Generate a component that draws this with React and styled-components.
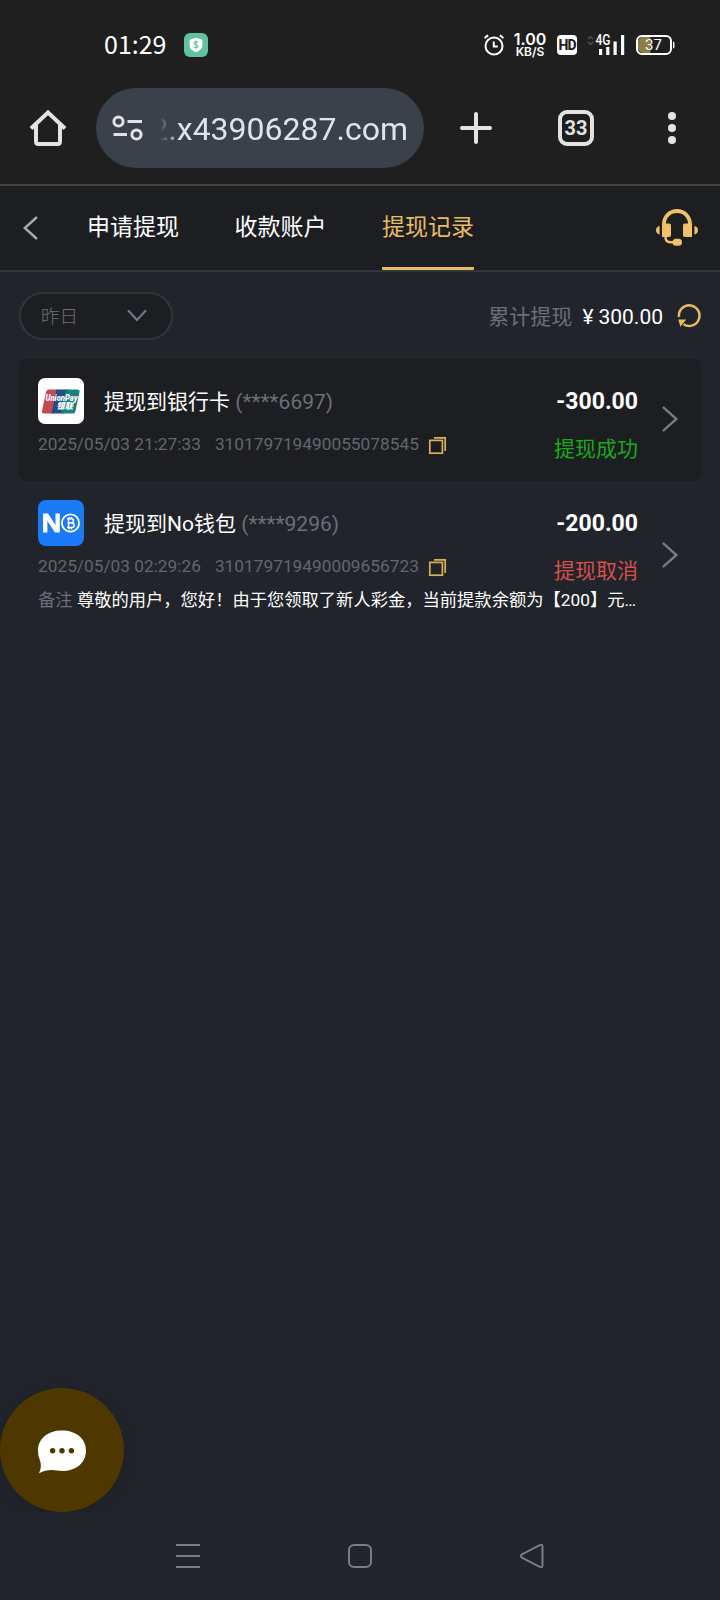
import React from 'react'
import styled, { createGlobalStyle } from 'styled-components'

const records = [
  {
    id: '310179719490055078545',
    logo: 'union',
    title: '提现到银行卡',
    account: '(****6697)',
    time: '2025/05/03 21:27:33',
    amount: '-300.00',
    status: '提现成功',
    ok: true,
  },
  {
    id: '310179719490009656723',
    logo: 'no',
    title: '提现到No钱包',
    account: '(****9296)',
    time: '2025/05/03 02:29:26',
    amount: '-200.00',
    status: '提现取消',
    ok: false,
    note: '尊敬的用户，您好！由于您领取了新人彩金，当前提款余额为【200】元…',
  },
]

function StatusBar() {
  return (
    <Status>
      <Clock>01:29</Clock>
      <Shield width="24" height="24" viewBox="0 0 24 24">
        <rect width="24" height="24" rx="6" fill="#5fc3a1" />
        <path d="M12 4.8l6.4 1.9v5.8c0 3.3-3 5.4-6.4 6.8-3.4-1.4-6.4-3.5-6.4-6.8V6.7z" fill="#fff" />
        <path d="M14 9.6c-.3-.8-1-1.1-2-1.1-1.2 0-2 .5-2 1.4 0 2.2 4.1 1 4.1 3.3 0 1-.9 1.5-2.1 1.5-1.1 0-1.9-.4-2.2-1.3M12 7.4v8.4" fill="none" stroke="#5fc3a1" strokeWidth="1.1" />
      </Shield>
      <Alarm width="20" height="22" viewBox="0 0 20 22" fill="none" stroke="#fff">
        <circle cx="10" cy="12" r="8.5" strokeWidth="2" />
        <path d="M9.8 7.5v5h4" strokeWidth="2" />
        <path d="M.8 4.4C1.5 3 2.7 2 4.2 1.500M15.8 1.5c1.5.5 2.7 1.5 3.4 2.9" strokeWidth="2" />
      </Alarm>
      <Speed>
        <b>1.00</b>
        <small>KB/S</small>
      </Speed>
      <Hd>HD</Hd>
      <Signal width="38" height="22" viewBox="0 0 38 22">
        <path d="M1 5l2.5-2.5L6 5M1 8l2.5 2.5L6 8" fill="none" stroke="#505050" strokeWidth="1.5" />
        <text x="8.5" y="11.4" fontSize="14" fontWeight="500" textLength="15" lengthAdjust="spacingAndGlyphs" fill="#fff">4G</text>
        <path d="M12 15h3.2v6H12zM19.2 13h3.2v8h-3.2zM26.5 7.5h3.2V21h-3.2zM34 1h3.2v20H34z" fill="#fff" />
      </Signal>
      <Battery width="39" height="20" viewBox="0 0 39 20">
        <path d="M14.3 2v16H7a5 5 0 01-5-5V7a5 5 0 015-5z" fill="#8e7d45" />
        <rect x="1" y="1" width="34" height="18" rx="5" fill="none" stroke="#fff" strokeWidth="2" />
        <path d="M37 6.5c1.3 0 1.5.8 1.5 3.5s-.2 3.5-1.5 3.5z" fill="#fff" />
        <text x="17.5" y="15.2" fontSize="15" textAnchor="middle" fill="#fff">37</text>
      </Battery>
    </Status>
  )
}

function BrowserBar() {
  return (
    <Browser>
      <svg width="36" height="36" viewBox="0 0 36 36" fill="none" stroke="#e3e3e3" strokeWidth="4" strokeLinejoin="round">
        <path d="M1 18.500L18 2.500l17 16" strokeLinejoin="miter" />
        <path d="M6 15v16.500Q6 34 8.500 34h19q2.500 0 2.500-2.500V15" />
      </svg>
      <Address>
        <svg width="31" height="26" viewBox="0 0 31 26" fill="none" stroke="#e3e3e3" strokeWidth="3">
          <circle cx="6.5" cy="6.5" r="4.600" />
          <circle cx="24.5" cy="19.5" r="4.600" />
          <path d="M15.5 6.500H30M1.5 19.500H15" />
        </svg>
        <Url>2.x43906287.com</Url>
      </Address>
      <Plus width="32" height="32" viewBox="0 0 32 32" stroke="#e3e3e3" strokeWidth="4" strokeLinecap="round">
        <path d="M2 16h28M16 2v28" />
      </Plus>
      <TabCount>33</TabCount>
      <svg width="8" height="32" viewBox="0 0 8 32" fill="#e3e3e3">
        <circle cx="4" cy="4" r="4" />
        <circle cx="4" cy="16" r="4" />
        <circle cx="4" cy="28" r="4" />
      </svg>
    </Browser>
  )
}

function Headset() {
  return (
    <svg width="42" height="38" viewBox="0 0 42 38" fill="#f0c265">
      <path d="M6 15.5C6 6.500 12.500 0 21 0s15 6.500 15 15.500h-3.800C32 8.500 27.500 4 21 4S10 8.500 9.800 15.500z" />
      <path d="M7.500 14.500h5.500c1.300 0 2 .7 2 2v9.500c0 1.300-.7 2-2 2H6V15z" />
      <path d="M34.500 14.500H29c-1.300 0-2 .7-2 2v9.500c0 1.300.7 2 2 2h7V15z" />
      <path d="M3.600 17v8.500C1.300 25 0 23.500 0 21.200S1.300 17.500 3.600 17zM38.400 17v8.500c2.300-.5 3.600-2 3.600-4.300s-1.300-3.700-3.600-4.200z" />
      <path d="M9.500 26v2c0 3.800 2 5.300 5 5.300h5" fill="none" stroke="#f0c265" strokeWidth="2.400" />
      <rect x="16.500" y="29.800" width="9.500" height="7" rx="3.500" />
    </svg>
  )
}

function UnionPay() {
  return (
    <svg width="46" height="46" viewBox="0 0 46 46">
      <rect width="46" height="46" rx="7" fill="#fff" />
      <path d="M10.500 11.500H20l-5 24H6q-2.500 0-2-2.500l4-19q.5-2.500 2.500-2.500z" fill="#c7494e" />
      <path d="M18.500 11.500H31l-5 24H13.500z" fill="#1d4e87" />
      <path d="M28 11.500h11.500q2.500 0 2 2.500l-4 19q-.5 2.500-2.500 2.500H23z" fill="#1a8181" />
      <text x="7.500" y="23" fontSize="8.500" fontWeight="900" fontStyle="italic" textLength="32" lengthAdjust="spacingAndGlyphs" fill="#fff">UnionPay</text>
      <text x="18.500" y="31" fontSize="8.500" fontWeight="900" fontStyle="italic" textLength="16.500" lengthAdjust="spacingAndGlyphs" fill="#fff">银联</text>
    </svg>
  )
}

function NoWallet() {
  return (
    <svg width="46" height="46" viewBox="0 0 46 46">
      <rect width="46" height="46" rx="8" fill="#1a7af8" />
      <path d="M5 32.500v-19h5l7.500 11.500V13.500h4.300v19H17L9.400 21v11.500z" fill="#fff" />
      <circle cx="32.500" cy="23" r="8.600" fill="none" stroke="#fff" strokeWidth="1.800" />
      <path d="M29 18.800h4.200c3 0 3 4.100 0 4.100h-3.200 3.700c3.300 0 3.300 4.500 0 4.500H29M30.500 18.800v8.600M31.300 17v1.800M33.500 17v1.800M31.300 27.400v1.800M33.500 27.400v1.800" fill="none" stroke="#fff" strokeWidth="1.500" />
    </svg>
  )
}

function Record({ item }) {
  return (
    <Card $dark={item.ok}>
      <Info>
        <Row>
          {item.logo === 'union' ? <UnionPay /> : <NoWallet />}
          <Title>
            {item.title} <span>{item.account}</span>
          </Title>
        </Row>
        <Meta>
          <span>{item.time}</span>
          <span>{item.id}</span>
          <svg width="17" height="17" viewBox="0 0 17 17" fill="none" stroke="#d9b056" strokeWidth="1.700">
            <rect x=".8" y="3.400" width="12.600" height="12.800" />
            <path d="M5 .8h11.200V14" />
          </svg>
        </Meta>
      </Info>
      <Result>
        <Amount>{item.amount}</Amount>
        <State $ok={item.ok}>{item.status}</State>
      </Result>
      <Arrow $low={!!item.note} width="16" height="26" viewBox="0 0 16 26" fill="none" stroke="#747a87" strokeWidth="2.400" strokeLinecap="round">
        <path d="M1.600 1.600L14.400 13 1.600 24.400" />
      </Arrow>
      {item.note && (
        <Note>
          <span>备注</span> {item.note}
        </Note>
      )}
    </Card>
  )
}

function App() {
  return (
    <Screen>
      <GlobalStyle />
      <StatusBar />
      <BrowserBar />
      <Header>
        <svg width="15" height="24" viewBox="0 0 15 24" fill="none" stroke="#a5aab8" strokeWidth="2.400">
          <path d="M14 1L1.800 12 14 23" />
        </svg>
        <Tabs>
          <Tab>申请提现</Tab>
          <Tab>收款账户</Tab>
          <Tab $active>提现记录</Tab>
        </Tabs>
        <Headset />
      </Header>
      <Content>
        <Filter>
          <Select>
            昨日
            <svg width="20" height="13" viewBox="0 0 20 13" fill="none" stroke="#747a87" strokeWidth="2">
              <path d="M1 1.200l9 9.800 9-9.800" />
            </svg>
          </Select>
          <Total>
            累计提现 <b>¥</b><strong>300.00</strong>
          </Total>
          <svg width="24" height="24" viewBox="0 0 24 24" fill="none" stroke="#e5ba60" strokeWidth="2.500">
            <path d="M2 13A10.300 10.300 0 116.500 20.200" />
            <path d="M1.200 15.600h8L3.500 22.800z" fill="#e5ba60" stroke="none" />
          </svg>
        </Filter>
        <List>
          {records.map((item) => (
            <Record key={item.id} item={item} />
          ))}
        </List>
        <Chat>
          <svg width="50" height="46" viewBox="0 0 50 46">
            <path d="M25 1.500c14 0 24 8 24 20.200S39 42 25 42c-4 0-6.500-.9-10-.9-5 0-8.500.7-13 3.200C4 40 4.500 36 3 31.500 1.700 28 1 25 1 21.700 1 9.500 11 1.500 25 1.500z" fill="#fff" />
            <circle cx="15.600" cy="21.700" r="2.700" fill="#4e3800" />
            <circle cx="25" cy="21.700" r="2.700" fill="#4e3800" />
            <circle cx="34.400" cy="21.700" r="2.700" fill="#4e3800" />
          </svg>
        </Chat>
      </Content>
      <NavBar>
        <svg width="24" height="24" viewBox="0 0 24 24" stroke="#7b7d81" strokeWidth="2">
          <path d="M0 1h24M0 12h24M0 23h24" />
        </svg>
        <svg width="24" height="24" viewBox="0 0 24 24" fill="none" stroke="#7b7d81" strokeWidth="2">
          <rect x="1" y="1" width="22" height="22" rx="5" />
        </svg>
        <svg width="24" height="24" viewBox="0 0 24 24" fill="none" stroke="#7b7d81" strokeWidth="2">
          <path d="M1.900 10.400L19.800 1.200q2.700-1.200 2.700 1.500v18.600q0 2.700-2.700 1.500L1.900 13.600q-2-1.600 0-3.200z" />
        </svg>
      </NavBar>
    </Screen>
  )
}

const GlobalStyle = createGlobalStyle`
* {
  box-sizing: border-box;
}
body {
  margin: 0;
  background: #21242b;
}
svg {
  display: block;
  flex: none;
  overflow: visible;
}
`;

const Screen = styled.div`
display: flex;
flex-direction: column;
width: 720px;
height: 1600px;
overflow: hidden;
background: #21242b;
color: #fff;
font-family: Roboto, "Noto Sans CJK SC", sans-serif;
white-space: nowrap;
`;

const Status = styled.div`
display: flex;
align-items: center;
height: 88px;
padding: 2px 45px 0 104px;
background: #1f1f1f;
`;

const Clock = styled.div`
width: 80px;
font-family: "Noto Sans CJK SC", sans-serif;
font-size: 25px;
line-height: 30px;
margin-top: -4px;
`;

const Shield = styled.svg`
margin-right: auto;
`;

const Alarm = styled.svg`
margin-right: 10px;
`;

const Speed = styled.div`
display: flex;
flex-direction: column;
align-items: center;
width: 32px;
margin-right: 11px;
font-family: Inter, sans-serif;
b {
  font-size: 16px;
  font-weight: 600;
  line-height: 13px;
}
small {
  font-size: 12px;
  font-weight: 600;
  line-height: 12px;
}
`;

const Hd = styled.div`
width: 20px;
height: 20px;
margin-right: 10px;
border-radius: 4px;
background: #fff;
color: #1f1f1f;
font-size: 14px;
font-weight: 800;
letter-spacing: -1px;
line-height: 20px;
text-align: center;
`;

const Signal = styled.svg`
margin-right: 11px;
`;

const Battery = styled.svg``;

const Browser = styled.div`
display: flex;
align-items: center;
height: 98px;
padding: 0 44px 16px 30px;
border-bottom: 2px solid #444446;
background: #1f1f1f;
`;

const Address = styled.div`
display: flex;
align-items: center;
width: 328px;
height: 80px;
margin: 0 36px 0 30px;
padding-left: 16px;
border-radius: 40px;
background: #3b414a;
`;

const Url = styled.div`
display: flex;
justify-content: flex-end;
width: 248px;
margin: 2px 0 0 17px;
overflow: hidden;
color: #e1e3e9;
font-size: 32px;
line-height: 40px;
mask-image: linear-gradient(90deg, transparent 0, #000 20px);
`;

const Plus = styled.svg`
margin-right: 66px;
`;

const TabCount = styled.div`
width: 36px;
height: 36px;
margin-right: auto;
border: 4px solid #e3e3e3;
border-radius: 9px;
color: #e3e3e3;
font-size: 20px;
font-weight: 700;
line-height: 29px;
text-align: center;
`;

const Header = styled.div`
display: flex;
align-items: center;
height: 86px;
padding: 0 22px 0 23px;
border-bottom: 2px solid #31343b;
background: #1d1e22;
`;

const Tabs = styled.div`
display: flex;
flex: 1;
gap: 55.5px;
height: 84px;
margin-left: 49px;
`;

const Tab = styled.div`
height: 84px;
border-bottom: 3px solid ${({ $active }) => ($active ? '#e8bc60' : 'transparent')};
border-radius: 1px;
color: ${({ $active }) => ($active ? '#e8bc60' : '#fff')};
font-size: 23px;
line-height: 84px;
`;

const Content = styled.div`
position: relative;
height: 1240px;
padding: 20px 19px 0;
overflow: hidden;
`;

const Filter = styled.div`
display: flex;
align-items: center;
height: 48px;
`;

const Select = styled.div`
display: flex;
align-items: center;
justify-content: space-between;
width: 154px;
height: 48px;
margin-right: auto;
padding: 0 24px 2px 20px;
border: 2px solid #31343b;
border-radius: 24px;
background: #1d1e22;
color: #6b6f79;
font-size: 18.5px;
font-weight: 300;
`;

const Total = styled.div`
margin: -2px 14px 0 0;
color: #6b6f79;
font-size: 21px;
b, strong {
  color: #fff;
  font-weight: 400;
}
b {
  margin: 0 5px 0 5px;
}
`;

const List = styled.div`
margin-top: 19px;
`;

const Card = styled.div`
display: flex;
flex-wrap: wrap;
min-height: 122px;
padding: 19px 23px 0 19px;
border-radius: 8px;
background: ${({ $dark }) => ($dark ? '#1d1e22' : 'transparent')};
`;

const Info = styled.div`
flex: 1;
`;

const Row = styled.div`
display: flex;
align-items: center;
gap: 20px;
height: 46px;
`;

const Title = styled.div`
margin-top: -2px;
font-size: 21px;
span {
  color: #6b6f79;
}
`;

const Meta = styled.div`
display: flex;
align-items: center;
height: 40px;
color: #62666f;
font-size: 17.3px;
svg {
  margin-top: 2px;
}
span + span {
  margin: 0 10px 0 14px;
}
`;

const Result = styled.div`
margin-right: 24px;
text-align: right;
`;

const Amount = styled.div`
padding-top: 1px;
font-size: 23px;
font-weight: 700;
line-height: 45px;
`;

const State = styled.div`
margin-top: 5px;
color: ${({ $ok }) => ($ok ? '#18ab18' : '#d5504a')};
font-size: 21px;
line-height: 40px;
`;

const Arrow = styled.svg`
margin-top: ${({ $low }) => ($low ? '42px' : '28px')};
`;

const Note = styled.div`
width: 620px;
margin-top: -6px;
font-size: 17.3px;
line-height: 30px;
span {
  color: #6b6f79;
}
`;

const Chat = styled.div`
position: absolute;
left: 0;
bottom: 0;
display: flex;
align-items: center;
justify-content: center;
width: 124px;
height: 124px;
padding-top: 4px;
border-radius: 50%;
background: #4e3800;
box-shadow: 0 4px 18px rgba(0, 0, 0, 0.14);
`;

const NavBar = styled.div`
display: flex;
justify-content: space-between;
height: 88px;
padding: 32px 176px;
`;

export default App
